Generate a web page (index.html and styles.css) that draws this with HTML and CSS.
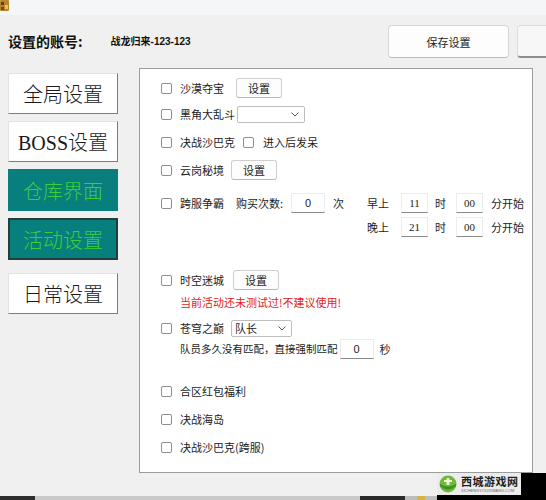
FILE: index.html
```html
<!DOCTYPE html>
<html lang="zh-CN">
<head>
<meta charset="utf-8">
<title>设置</title>
<link rel="stylesheet" href="styles.css">
</head>
<body>
<div class="titlebar">
  <svg class="app-icon" width="10" height="12" viewBox="0 0 10 12">
    <rect x="0" y="0" width="9" height="11" rx="1" fill="#b8862b"/>
    <rect x="1" y="2" width="3" height="3" fill="#6b3d12"/>
    <rect x="5" y="5" width="3" height="4" fill="#e9c25a"/>
    <rect x="1" y="7" width="3" height="3" fill="#7a4a18"/>
  </svg>
</div>
<header class="header">
  <span class="acct-label">设置的账号:</span>
  <span class="acct-name">战龙归来-123-123</span>
  <div class="header-actions">
    <div class="save-btn">保存设置</div>
    <div class="extra-btn"></div>
  </div>
</header>
<div class="main">
  <nav class="nav">
    <div class="nav-btn">全局设置</div>
    <div class="nav-btn">BOSS设置</div>
    <div class="nav-btn nav-teal tall">仓库界面</div>
    <div class="nav-btn nav-teal nav-active tall">活动设置</div>
    <div class="nav-btn spaced">日常设置</div>
  </nav>
  <section class="panel">
    <div class="row r1"><span class="cb"></span><span class="lbl">沙漠夺宝</span><span class="btn ml12">设置</span></div>
    <div class="row r2"><span class="cb"></span><span class="lbl">黑角大乱斗</span><span class="select sel-a"><span class="sel-text"></span><svg class="chev" width="8" height="5" viewBox="0 0 8 5"><path d="M0.5 0.5 L4 4 L7.5 0.5" fill="none" stroke="#555" stroke-width="1"/></svg></span></div>
    <div class="row r3"><span class="cb"></span><span class="lbl">决战沙巴克</span><span class="cb ml8"></span><span class="lbl ml9">进入后发呆</span></div>
    <div class="row r4"><span class="cb"></span><span class="lbl">云岗秘境</span><span class="btn ml7">设置</span></div>
    <div class="multi r5">
      <div class="row"><span class="cb"></span><span class="lbl">跨服争霸</span><span class="lbl ml12">购买次数:</span><span class="inp inp-buy">0</span><span class="lbl ml8">次</span></div>
      <div class="timeblock">
        <div class="row"><span class="tlbl">早上</span><span class="inp inp-t">11</span><span class="tlbl ml7">时</span><span class="inp inp-t ml10">00</span><span class="tlbl ml8">分开始</span></div>
        <div class="row"><span class="tlbl">晚上</span><span class="inp inp-t">21</span><span class="tlbl ml7">时</span><span class="inp inp-t ml10">00</span><span class="tlbl ml8">分开始</span></div>
      </div>
    </div>
    <div class="row r6"><span class="cb"></span><span class="lbl">时空迷城</span><span class="btn ml9">设置</span></div>
    <div class="row r7 indent warn">当前活动还未测试过!不建议使用!</div>
    <div class="row r8"><span class="cb"></span><span class="lbl">苍穹之巅</span><span class="select sel-b"><span class="sel-text">队长</span><svg class="chev" width="8" height="5" viewBox="0 0 8 5"><path d="M0.5 0.5 L4 4 L7.5 0.5" fill="none" stroke="#555" stroke-width="1"/></svg></span></div>
    <div class="row r9 indent"><span class="long-lbl">队员多久没有匹配，直接强制匹配</span><span class="inp inp-sec">0</span><span class="lbl ml6">秒</span></div>
    <div class="row r10"><span class="cb"></span><span class="lbl">合区红包福利</span></div>
    <div class="row r11"><span class="cb"></span><span class="lbl">决战海岛</span></div>
    <div class="row r11"><span class="cb"></span><span class="lbl">决战沙巴克(跨服)</span></div>
  </section>
</div>
<div class="footer">
  <div class="taskbar">
    <span class="tb-dark"></span><span class="tb-light"></span><span class="tb-dark2"></span><span class="tb-mid"></span><span class="tb-yellow"></span><span class="tb-rest"></span>
  </div>
</div>
<div class="watermark">
  <div class="wm-box">
    <svg class="wm-icon" width="20" height="18" viewBox="0 0 20 18">
      <circle cx="10" cy="9" r="8.5" fill="#6fb83a"/>
      <path d="M2 9 Q10 14 18 9 L18 11 Q10 18 2 11 Z" fill="#3f8f22"/>
      <rect x="8.5" y="3" width="3" height="7" rx="1" fill="#eaf5d8"/>
      <rect x="6" y="5" width="8" height="2" fill="#eaf5d8"/>
    </svg>
    <div class="wm-text">
      <span class="wm-title">西城游戏网</span>
      <span class="wm-sub">XICHENGYOUXIWANG.COM</span>
    </div>
  </div>
</div>
</body>
</html>
```

FILE: styles.css
```css
html, body {
  margin: 0;
  padding: 0;
}
body {
  width: 546px;
  height: 500px;
  overflow: hidden;
  position: relative;
  background: #f0f0f0;
  color: #1c1c1c;
  font-family: "Noto Sans CJK SC", "Noto Sans", sans-serif;
}

.titlebar {
  height: 15px;
  background: #f5f6f8;
}
.app-icon {
  display: block;
}

.header {
  height: 53px;
  box-sizing: border-box;
  padding: 10px 0 0 8px;
  display: flex;
  align-items: flex-start;
}
.acct-label {
  font-size: 14px;
  font-weight: 700;
  line-height: 33px;
  color: #111;
}
.acct-name {
  margin-left: 28px;
  font-size: 10px;
  font-weight: 700;
  line-height: 33px;
  font-family: "Liberation Sans", "Noto Sans CJK SC", sans-serif;
  color: #111;
}
.header-actions {
  margin-left: auto;
  width: 158px;
  overflow: hidden;
  display: flex;
  gap: 8px;
}
.save-btn {
  flex: none;
  width: 121px;
  height: 33px;
  box-sizing: border-box;
  background: #fdfdfd;
  border: 1px solid #d6d6d6;
  border-bottom-color: #bdbdbd;
  border-radius: 4px;
  font-size: 11px;
  display: flex;
  align-items: center;
  justify-content: center;
  color: #222;
}
.extra-btn {
  flex: none;
  width: 60px;
  height: 33px;
  box-sizing: border-box;
  background: #f7f7f7;
  border: 1px solid #dcdcdc;
  border-bottom: 2px solid #8e8e8e;
  border-radius: 4px 0 0 4px;
}

.main {
  display: flex;
  height: 405px;
}
.nav {
  width: 139px;
  box-sizing: border-box;
  padding: 5px 0 0 8px;
  display: flex;
  flex-direction: column;
  gap: 7px;
}
.nav-btn {
  width: 110px;
  height: 41px;
  box-sizing: border-box;
  background: #fff;
  border: 1px solid;
  border-color: #e2e2e2 #7c7c7c #7c7c7c #e2e2e2;
  font-family: "Liberation Serif", "Noto Sans CJK SC", serif;
  font-size: 20px;
  font-weight: 300;
  display: flex;
  align-items: center;
  justify-content: center;
  color: #1a1a1a;
}
.nav-btn.tall {
  height: 42px;
}
.nav-teal {
  background: #087f7d;
  border-color: #087f7d;
  color: #3bcf39;
}
.nav-active {
  border: 2px solid #223f3d;
}
.nav-btn.spaced {
  margin-top: 6px;
}

.panel {
  width: 394px;
  height: 405px;
  box-sizing: border-box;
  border: 1px solid #9c9c9c;
  background: #fff;
  padding: 9px 0 0 21px;
  font-size: 11px;
}
.row {
  display: flex;
  align-items: center;
  height: 20px;
  font-size: 11px;
  line-height: 1;
  white-space: nowrap;
}
.multi {
  display: flex;
  align-items: flex-start;
}
.timeblock {
  margin-left: 23px;
  display: flex;
  flex-direction: column;
  gap: 4px;
}
.cb {
  flex: none;
  width: 11px;
  height: 11px;
  box-sizing: border-box;
  border: 1px solid #8e8e8e;
  border-radius: 2px;
  background: #fff;
}
.lbl {
  margin-left: 8px;
}
.btn {
  width: 46px;
  height: 20px;
  box-sizing: border-box;
  background: #fdfdfd;
  border: 1px solid #cfcfcf;
  border-bottom-color: #b8b8b8;
  border-radius: 3px;
  display: flex;
  align-items: center;
  justify-content: center;
}
.select {
  height: 17px;
  box-sizing: border-box;
  background: #fff;
  border: 1px solid #bdbdbd;
  border-radius: 2px;
  display: flex;
  align-items: center;
  justify-content: space-between;
  padding: 0 5px 0 3px;
}
.sel-a {
  width: 68px;
  margin-left: 2px;
}
.sel-b {
  width: 61px;
  margin-left: 7px;
}
.sel-text {
  font-size: 11px;
}
.chev {
  display: block;
}
.inp {
  height: 20px;
  box-sizing: border-box;
  background: #fff;
  border: 1px solid #ececec;
  border-bottom: 1px solid #8a8a8a;
  display: flex;
  align-items: center;
  justify-content: center;
  font-family: "Liberation Serif", serif;
  font-size: 11px;
}
.inp-buy {
  width: 34px;
  margin-left: 8px;
  font-family: "Liberation Sans", sans-serif;
}
.inp-t {
  width: 27px;
  margin-left: 12px;
}
.inp-t.ml10 {
  margin-left: 10px;
}
.inp-sec {
  width: 34px;
  margin-left: 2px;
  font-family: "Liberation Sans", sans-serif;
}
.long-lbl {
  font-size: 10.5px;
}
.indent {
  padding-left: 19px;
}
.warn {
  color: #e3231b;
}

.ml6 { margin-left: 6px; }
.ml7 { margin-left: 7px; }
.ml8 { margin-left: 8px; }
.ml9 { margin-left: 9px; }
.ml12 { margin-left: 12px; }

.r1 { margin-top: 0; }
.r2 { margin-top: 6px; }
.r3 { margin-top: 8px; }
.r4 { margin-top: 8px; }
.r5 { margin-top: 13px; }
.r6 { margin-top: 33px; }
.r7 { margin-top: 2px; }
.r8 { margin-top: 6px; }
.r9 { margin-top: 1px; }
.r10 { margin-top: 22px; }
.r11 { margin-top: 8px; }

.footer {
  height: 27px;
  display: flex;
  flex-direction: column;
  justify-content: flex-end;
}
.taskbar {
  height: 4px;
  display: flex;
}
.tb-dark { width: 35px; background: #2e2e2e; }
.tb-light { width: 325px; background: #c9c9c9; }
.tb-dark2 { width: 45px; background: #2a2a2a; }
.tb-mid { width: 12px; background: #bdbdbd; }
.tb-yellow { width: 8px; background: #d9b443; }
.tb-rest { flex: 1; background: #bdbdbd; }

.watermark {
  position: absolute;
  left: 437px;
  top: 473px;
  width: 109px;
  height: 27px;
  background: #000;
}
.wm-box {
  width: 84px;
  height: 22px;
  background: #ececec;
  display: flex;
  align-items: center;
  padding-left: 1px;
  box-sizing: border-box;
}
.wm-icon {
  display: block;
  flex: none;
}
.wm-text {
  margin-left: 3px;
  display: flex;
  flex-direction: column;
}
.wm-title {
  font-size: 11px;
  line-height: 13px;
  font-weight: 700;
  color: #1e1e1e;
  letter-spacing: 0.5px;
}
.wm-sub {
  font-size: 4px;
  line-height: 5px;
  color: #666;
  font-family: "Liberation Sans", sans-serif;
  white-space: nowrap;
}
```
